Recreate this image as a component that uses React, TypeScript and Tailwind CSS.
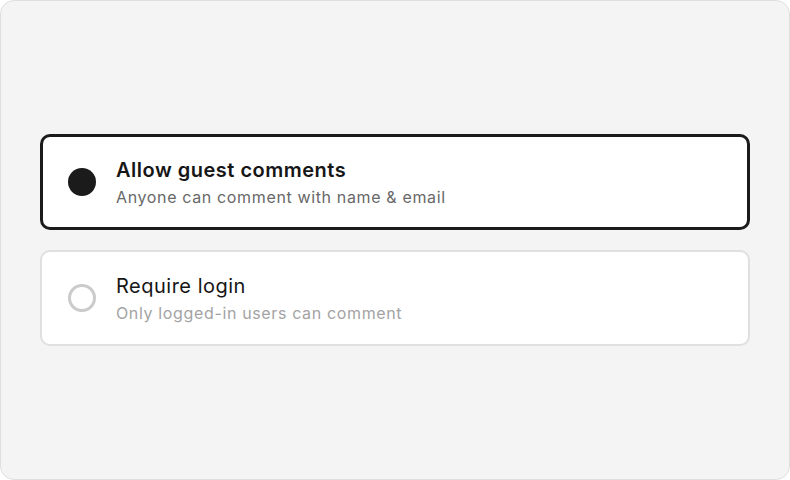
import { useState } from 'react';

const options = [
  {
    id: 'guest',
    title: 'Allow guest comments',
    description: 'Anyone can comment with name & email',
  },
  {
    id: 'login',
    title: 'Require login',
    description: 'Only logged-in users can comment',
  },
];

export default function App() {
  const [selected, setSelected] = useState('guest');

  return (
    <main
      className="w-[790px] h-[480px] bg-[#f4f4f4] border border-[#dedede] rounded-[14px] flex flex-col justify-center px-[39px] gap-5"
      style={{ fontFamily: 'Inter, "Noto Sans", sans-serif' }}
    >
      {options.map((opt) => {
        const active = selected === opt.id;
        return (
          <button
            key={opt.id}
            type="button"
            onClick={() => setSelected(opt.id)}
            className={`w-full h-[96px] bg-white rounded-[10px] flex items-center gap-5 text-left ${
              active ? 'border-[3px] border-[#1b1b1b] pl-[25px]' : 'border-2 border-[#e0e0e0] pl-[26px]'
            }`}
          >
            {active ? (
              <span className="w-7 h-7 rounded-full bg-[#1b1b1b] shrink-0" />
            ) : (
              <span className="w-7 h-7 rounded-full border-[3px] border-[#cbcbcb] shrink-0" />
            )}
            <span className="flex flex-col">
              <span
                className={`text-[20px] leading-[28px] tracking-[0.025em] text-[#161616] ${
                  active ? 'font-semibold' : 'font-normal'
                }`}
              >
                {opt.title}
              </span>
              <span
                className={`text-[16px] leading-[24px] mt-[1px] tracking-[0.04em] ${
                  active ? 'text-[#686868]' : 'text-[#a3a3a3]'
                }`}
              >
                {opt.description}
              </span>
            </span>
          </button>
        );
      })}
    </main>
  );
}
